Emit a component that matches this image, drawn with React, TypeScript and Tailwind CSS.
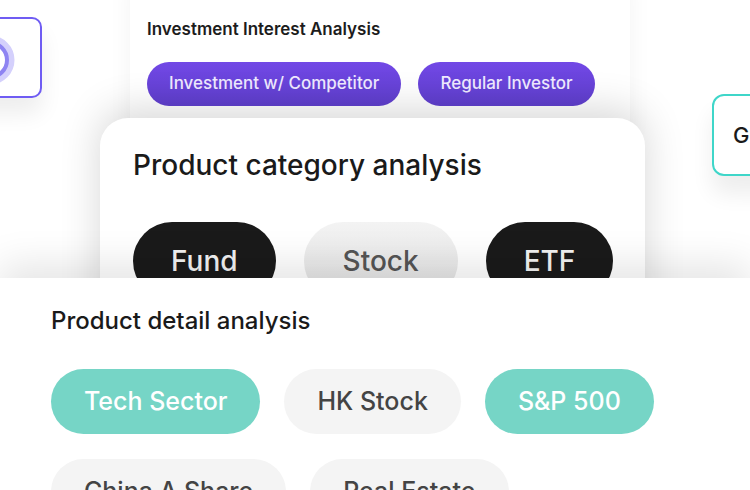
import React from "react";

const font = { fontFamily: "Inter, 'Noto Sans', sans-serif" };

const PurpleButton = ({ label }: { label: string }) => (
  <div className="h-[44px] px-[22px] flex items-center rounded-full bg-gradient-to-b from-[#7248e6] to-[#5f3fcd] text-[#efeaff] text-[17px] font-medium">
    {label}
  </div>
);

const CategoryPill = ({ label, active }: { label: string; active: boolean }) => (
  <div
    className={
      active
        ? "h-[78px] px-[38px] flex items-center rounded-full bg-[#1a1a1a] text-[#f2f2f2] text-[28px] font-medium"
        : "h-[78px] px-[39px] flex items-center rounded-full bg-gradient-to-b from-[#f3f3f3] to-[#e2e2e2] text-[#555555] text-[28px] font-medium"
    }
  >
    {label}
  </div>
);

const DetailPill = ({ label, active }: { label: string; active: boolean }) => (
  <div
    className={
      active
        ? "h-[65px] px-[33px] flex items-center rounded-full bg-[#76d5c6] text-white text-[25px] font-medium"
        : "h-[65px] px-[33px] flex items-center rounded-full bg-[#f4f4f4] text-[#444444] text-[25px] font-medium"
    }
  >
    {label}
  </div>
);

export default function App() {
  return (
    <div className="relative w-[750px] h-[490px] overflow-hidden bg-white" style={font}>
      {/* left node */}
      <div className="absolute left-[-40px] top-[17px] w-[82px] h-[81px] rounded-[10px] border-2 border-[#6f5cf3] bg-white shadow-[0_16px_22px_rgba(0,0,0,0.07)] overflow-hidden">
        <svg className="absolute left-0 top-0" width="82" height="81" viewBox="0 0 82 81">
          <circle cx="28" cy="41" r="20" fill="none" stroke="#d4d0fc" strokeWidth="9" />
          <circle cx="28" cy="41" r="17" fill="none" stroke="#8e84f2" strokeWidth="4" />
        </svg>
      </div>

      {/* right node */}
      <div className="absolute left-[712px] top-[94px] w-[120px] h-[82px] rounded-[12px] border-2 border-[#3fd6c9] bg-white shadow-[0_18px_22px_rgba(0,0,0,0.07)] flex items-center pl-[19px]">
        <span className="text-[22px] font-medium text-[#1a1a1a]">G</span>
      </div>

      {/* back card */}
      <div className="absolute left-[130px] top-[-30px] w-[500px] h-[180px] rounded-[24px] bg-white shadow-[0_0_24px_rgba(0,0,0,0.05)] pl-[17px] pt-[48px]">
        <div className="text-[17px] font-semibold text-[#1c1c1c] leading-[22px]">Investment Interest Analysis</div>
        <div className="flex gap-[17px] mt-[22px]">
          <PurpleButton label="Investment w/ Competitor" />
          <PurpleButton label="Regular Investor" />
        </div>
      </div>

      {/* middle card */}
      <div className="absolute left-[100px] top-[118px] w-[545px] h-[260px] rounded-[28px] bg-white shadow-[0_-8px_40px_rgba(0,0,0,0.16)] pl-[33px] pt-[29px]">
        <div className="text-[28px] font-medium text-[#1a1a1a] leading-[36px]">Product category analysis</div>
        <div className="flex gap-[28px] mt-[39px]">
          <CategoryPill label="Fund" active />
          <CategoryPill label="Stock" active={false} />
          <CategoryPill label="ETF" active />
        </div>
      </div>

      {/* front card */}
      <div className="absolute left-0 top-[278px] w-[750px] h-[240px] bg-white shadow-[0_-14px_36px_rgba(0,0,0,0.1)] pl-[51px] pt-[27px]">
        <div className="text-[24px] font-medium text-[#1a1a1a] leading-[32px]">Product detail analysis</div>
        <div className="flex flex-wrap gap-x-[24px] gap-y-[25px] mt-[32px] w-[640px]">
          <DetailPill label="Tech Sector" active />
          <DetailPill label="HK Stock" active={false} />
          <DetailPill label="S&P 500" active />
          <DetailPill label="China A Share" active={false} />
          <DetailPill label="Real Estate" active={false} />
        </div>
      </div>
    </div>
  );
}
